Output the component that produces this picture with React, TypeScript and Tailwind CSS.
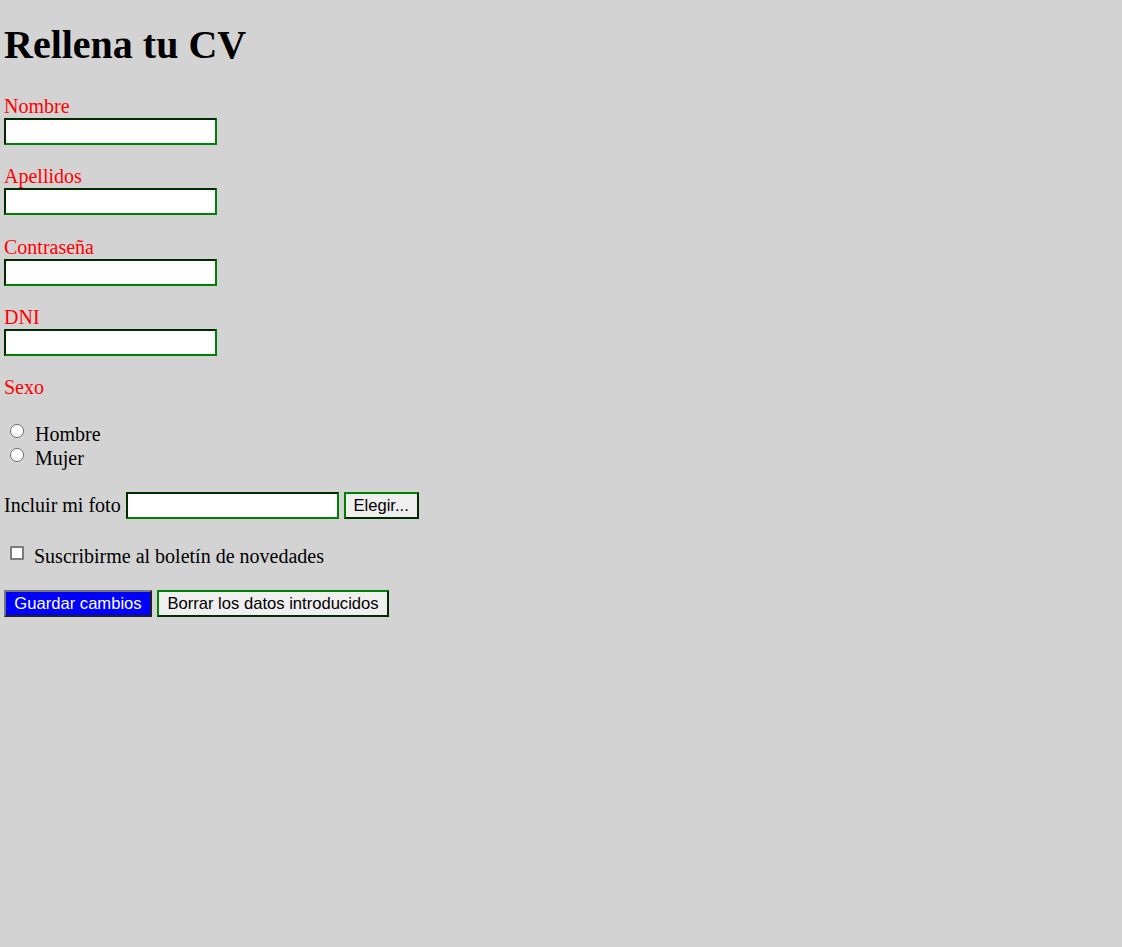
import React from "react";

const fields = ["Nombre", "Apellidos", "Contraseña", "DNI"];

const inputCls =
  "block w-[213px] h-[27px] border-2 border-[#008000] [border-style:inset] bg-white px-[2px] text-[13px] outline-none";

const btnCls =
  "h-[27px] border-2 [border-style:outset] font-['Liberation_Sans',Arial,sans-serif] text-[16.6px] leading-[20px] text-center";

export default function App() {
  return (
    <div className="min-h-screen bg-[#d3d3d3] px-[4px] font-['Liberation_Serif','Times_New_Roman',serif] text-[20px] leading-[23px] text-black">
      <h1 className="pt-[22px] text-[40px] font-bold leading-[46px]">Rellena tu CV</h1>

      <form className="mt-[27px] flex flex-col" onSubmit={(e) => e.preventDefault()}>
        {fields.map((f, i) => (
          <div key={f} className={i === 0 ? "" : i === 2 ? "mt-[21px]" : "mt-[20px]"}>
            <label className="block text-[#ff0000]">{f}</label>
            <input type={f === "Contraseña" ? "password" : "text"} className={inputCls} />
          </div>
        ))}

        <div className="mt-[20px] text-[#ff0000]">Sexo</div>

        <div className="mt-[23px] flex flex-col">
          {["Hombre", "Mujer"].map((s) => (
            <label key={s} className="flex items-start leading-[24px]">
              <input
                type="radio"
                name="sexo"
                className="mt-[2px] ml-[6px] h-[14px] w-[14px] appearance-none rounded-full border border-[#6b6b6b] bg-white checked:border-[4px] checked:border-[#0075ff]"
              />
              <span className="ml-[11px]">{s}</span>
            </label>
          ))}
        </div>

        <div className="mt-[22px] flex items-center">
          <span>Incluir mi foto</span>
          <input type="text" readOnly className={inputCls + " ml-[5px]"} />
          <button type="button" className={btnCls + " ml-[5px] w-[75px] border-[#008000] bg-[#efefef]"}>
            Elegir...
          </button>
        </div>

        <label className="mt-[26px] flex items-start">
          <input
            type="checkbox"
            className="mt-[1px] ml-[6px] h-[14px] w-[14px] appearance-none rounded-[1px] border-2 border-[#7a7a7a] bg-white checked:bg-[#0075ff]"
          />
          <span className="ml-[10px]">Suscribirme al boletín de novedades</span>
        </label>

        <div className="mt-[22px] flex gap-[5px]">
          <button type="submit" className={btnCls + " w-[148px] border-[#767676] bg-[#0000ff] text-white"}>
            Guardar cambios
          </button>
          <button type="reset" className={btnCls + " w-[232px] border-[#008000] bg-[#efefef]"}>
            Borrar los datos introducidos
          </button>
        </div>
      </form>
    </div>
  );
}
